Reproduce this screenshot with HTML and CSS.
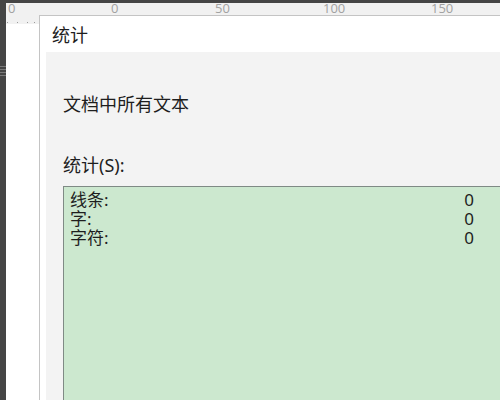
FILE: index.html
```html
<!DOCTYPE html>
<html lang="zh-CN">
<head>
<meta charset="utf-8">
<link rel="stylesheet" href="styles.css">
</head>
<body>
<div class="app">
  <div class="sidebar">
    <span class="grip"></span><span class="grip"></span><span class="grip"></span><span class="grip"></span>
  </div>
  <div class="workspace">
    <div class="ruler">
      <span class="rl" style="left:2px">0</span>
      <span class="rl" style="left:105px">0</span>
      <span class="rl" style="left:209px">50</span>
      <span class="rl" style="left:317px">100</span>
      <span class="rl" style="left:425px">150</span>
      <span class="dot" style="left:1px"></span>
      <span class="dot" style="left:11px"></span>
      <span class="dot" style="left:21px"></span>
      <span class="dot" style="left:28px"></span>
    </div>
    <div class="page"></div>
  </div>
  <div class="dialog">
    <div class="titlebar">统计</div>
    <div class="frame">
      <div class="body">
        <div class="scope">文档中所有文本</div>
        <div class="label">统计(S):</div>
        <div class="stats">
          <div class="row"><span>线条:</span><span>0</span></div>
          <div class="row"><span>字:</span><span>0</span></div>
          <div class="row"><span>字符:</span><span>0</span></div>
        </div>
      </div>
    </div>
  </div>
</div>
</body>
</html>
```
FILE: styles.css
```css
html, body {
  margin: 0;
  padding: 0;
  width: 500px;
  height: 400px;
  overflow: hidden;
  background: #454545;
  font-family: "Noto Sans", "Noto Sans CJK SC", sans-serif;
}
.app {
  position: relative;
  display: flex;
  width: 500px;
  height: 400px;
  overflow: hidden;
}
.sidebar {
  width: 6px;
  flex: none;
  background: #454545;
  display: flex;
  flex-direction: column;
  gap: 2px;
  padding-top: 66px;
  box-sizing: border-box;
}
.grip {
  display: block;
  height: 1px;
  background: #7a7a7a;
}
.workspace {
  flex: 1;
  display: flex;
  flex-direction: column;
  padding-top: 3px;
}
.ruler {
  position: relative;
  height: 21px;
  background: #f1f1f1;
  flex: none;
  overflow: hidden;
}
.rl {
  position: absolute;
  top: 0;
  font-size: 13px;
  line-height: 11px;
  color: #a2a2a2;
  font-family: "Open Sans", sans-serif;
}
.dot {
  position: absolute;
  top: 19px;
  width: 1px;
  height: 1px;
  background: #9a9a9a;
}
.page {
  flex: 1;
  background: #ffffff;
}
.dialog {
  position: absolute;
  left: 39px;
  top: 15px;
  width: 480px;
  height: 420px;
  border: 1px solid #c4c4c4;
  background: #ffffff;
  display: flex;
  flex-direction: column;
}
.titlebar {
  height: 36px;
  flex: none;
  padding-left: 12px;
  font-size: 18px;
  line-height: 36px;
  color: #1e1e1e;
  font-family: "Noto Sans CJK SC", sans-serif;
}
.frame {
  flex: 1;
  padding-left: 6px;
  display: flex;
}
.body {
  flex: 1;
  background: #f3f3f3;
  padding-left: 17px;
  padding-top: 39px;
  color: #1e1e1e;
}
.scope {
  font-size: 18px;
  line-height: 24px;
  font-family: "Noto Sans CJK SC", sans-serif;
}
.label {
  margin-top: 38px;
  font-size: 18px;
  line-height: 24px;
}
.stats {
  margin-top: 9px;
  background: #cce8cf;
  border: 1px solid #7f8a85;
  border-right: none;
  border-bottom: none;
  height: 260px;
  padding: 3px 46px 0 6px;
}
.row {
  display: flex;
  justify-content: space-between;
  font-size: 17px;
  line-height: 19px;
  color: #1e1e1e;
}
```
